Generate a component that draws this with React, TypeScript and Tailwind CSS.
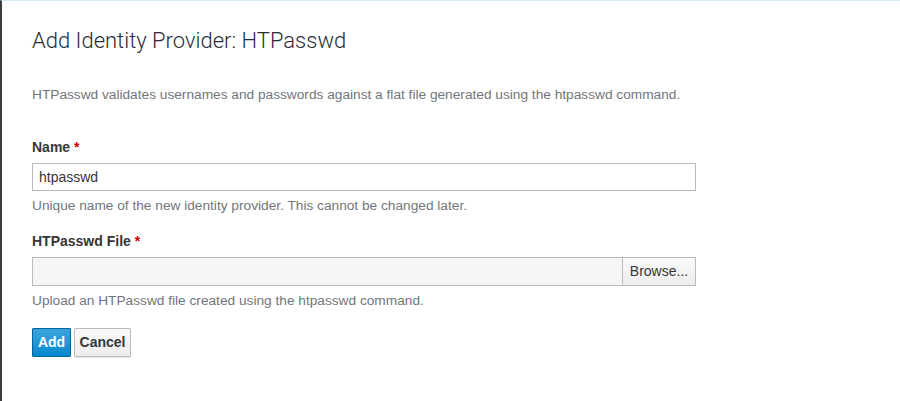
export default function App() {
  return (
    <div className="h-[401px] w-[900px] bg-white border-l-2 border-[#3a3d41] border-t border-t-[#d8ecf7] overflow-hidden" style={{ fontFamily: '"Liberation Sans", Arial, sans-serif' }}>
      <div className="pl-[30px] pr-[30px]">
        <h1 className="pt-[24px] text-[22px] font-light leading-[32px] text-[#292e34]" style={{ fontFamily: 'Roboto, "Liberation Sans", sans-serif' }}>
          Add Identity Provider: HTPasswd
        </h1>
        <p className="mt-[28px] text-[13.7px] leading-[20px] text-[#72767b]">
          HTPasswd validates usernames and passwords against a flat file generated using the htpasswd command.
        </p>

        <div className="mt-[32px] w-[664px]">
          <label className="block text-[14px] font-bold leading-[20px] text-[#363636]">
            Name <span className="text-[#c00]">*</span>
          </label>
          <input
            defaultValue="htpasswd"
            className="mt-[6px] block h-[28px] w-full border border-[#bbb] bg-white px-[6px] text-[14px] text-[#363636] outline-none"
          />
          <p className="mt-[5px] text-[13.7px] leading-[20px] text-[#72767b]">
            Unique name of the new identity provider. This cannot be changed later.
          </p>

          <label className="mt-[15px] block text-[14px] font-bold leading-[20px] text-[#363636]">
            HTPasswd File <span className="text-[#c00]">*</span>
          </label>
          <div className="mt-[6px] flex h-[29px] w-full border border-[#bbb]">
            <div className="flex-1 bg-[#f5f5f5]" />
            <button className="w-[73px] border-l border-[#bbb] bg-gradient-to-b from-[#fafafa] to-[#ededed] text-[14px] text-[#363636]">
              Browse...
            </button>
          </div>
          <p className="mt-[5px] text-[13.7px] leading-[20px] text-[#72767b]">
            Upload an HTPasswd file created using the htpasswd command.
          </p>
        </div>

        <div className="mt-[17px] flex gap-[3px]">
          <button className="h-[29px] w-[39px] rounded-[1px] border border-[#00659c] bg-gradient-to-b from-[#39a5dc] to-[#0088ce] text-[14px] font-bold text-white">
            Add
          </button>
          <button className="h-[29px] w-[57px] rounded-[1px] border border-[#bbb] bg-gradient-to-b from-[#fafafa] to-[#ededed] text-[14px] font-bold text-[#363636] shadow-[0_1px_1px_rgba(0,0,0,0.1)]">
            Cancel
          </button>
        </div>
      </div>
    </div>
  );
}
